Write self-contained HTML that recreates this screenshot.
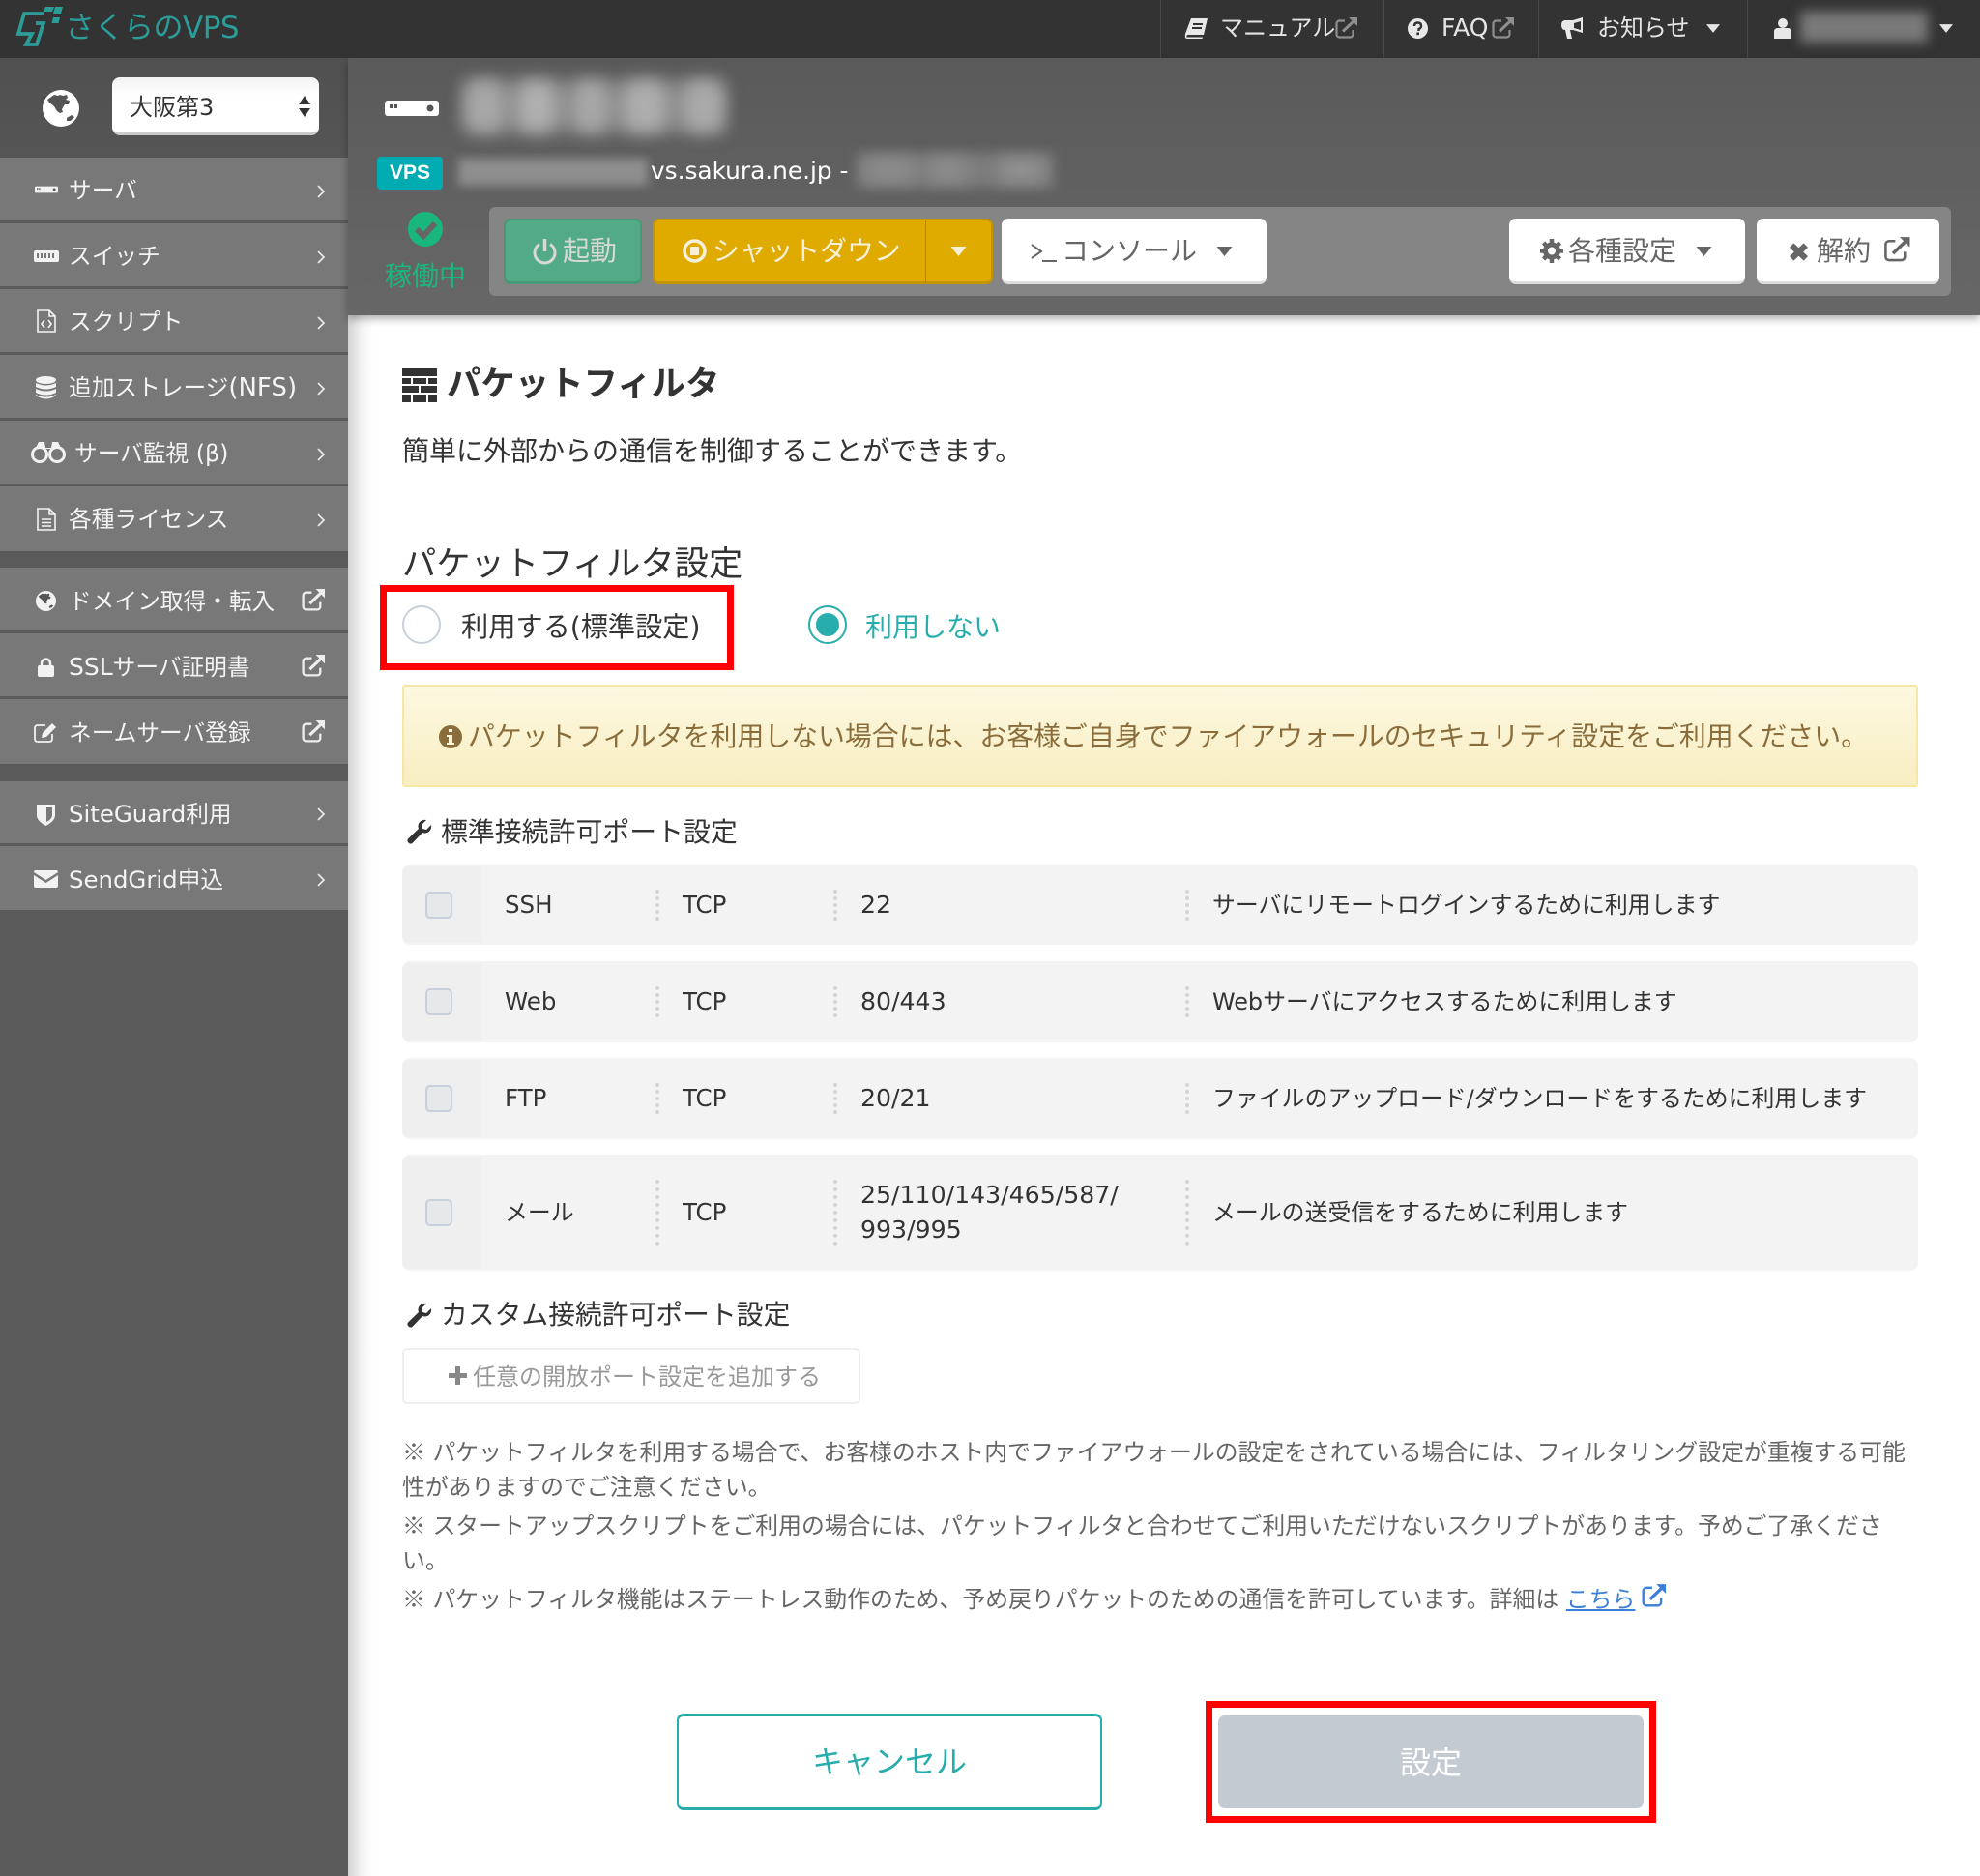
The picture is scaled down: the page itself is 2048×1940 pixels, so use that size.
<!DOCTYPE html>
<html lang="ja"><head><meta charset="utf-8"><title>パケットフィルタ</title>
<style>
html,body{margin:0;padding:0;background:#fff}
body{position:relative;width:2048px;height:1940px;overflow:hidden;font-family:"DejaVu Sans","Noto Sans CJK JP",sans-serif;color:#333}
.a{position:absolute}
.t{position:absolute;white-space:nowrap;line-height:40px;margin-top:-18px;font-size:24px;letter-spacing:0}
svg{position:absolute;overflow:visible}
.row{position:absolute;left:0;width:360px;background:#787878;border-bottom:3px solid #5c5c5c;box-sizing:border-box}
.m{color:#f4f4f4;left:71px;font-size:23.700px}
.tb{position:absolute;left:416px;width:1568px;background:#f3f3f3;border-radius:8px}
.tb i{position:absolute;left:0;top:2px;bottom:2px;width:82px;background:#efefef;border-radius:8px 0 0 8px}
.cb{position:absolute;left:440px;width:24px;height:24px;background:#e6e8ea;border:2px solid #c8d0da;border-radius:5px}
.dot{position:absolute;width:0;border-left:4px dotted #d4d4d4}
.b{position:absolute;top:226px;height:68px;box-sizing:border-box;border-radius:7px;background:#fff;border-bottom:3px solid #ddd}
.bt{color:#666;font-size:28px}
.red{position:absolute;box-sizing:border-box;border:7px solid #f00}
.n{font-size:23.850px;color:#666;left:416px}
.k{font-family:"Noto Sans CJK JP",sans-serif}
.la{font-size:24.500px}
.po{font-size:25.200px}
.j{font-size:23.900px}
.bl{position:absolute;filter:blur(9px);border-radius:12px}
</style></head><body>
<svg width="0" height="0" style="position:absolute">
<defs>
<symbol id="ext" viewBox="0 0 24 24"><path d="M11 4.500H5.500a3 3 0 0 0-3 3v11a3 3 0 0 0 3 3h11a3 3 0 0 0 3-3V14" fill="none" stroke="currentColor" stroke-width="2.200"/><path d="M9 15.500L20 5" fill="none" stroke="currentColor" stroke-width="3"/><path d="M15 1h9v9z" fill="currentColor"/></symbol>
<symbol id="chev" viewBox="0 0 8 14"><path d="M1 1l6 6-6 6" fill="none" stroke="currentColor" stroke-width="1.600"/></symbol>
<symbol id="car" viewBox="0 0 16 10"><path d="M0 0h16l-8 10z" fill="currentColor"/></symbol>
<symbol id="wr" viewBox="0 0 26 26"><path d="M25 6c1 5-3 10-9 8L6 24.500c-1.500 1.500-3 1.500-4.500 0S0 21.500 1.500 20L12 10C10 4 15 0 20 1l-5 5 1 4 4 1z" fill="currentColor"/></symbol>
<symbol id="srv" viewBox="0 0 56 16"><rect width="56" height="16" rx="3" fill="currentColor"/><circle cx="47" cy="8" r="3.500" fill="#555"/><rect x="5" y="4" width="3" height="4" fill="#555"/><rect x="10" y="4" width="3" height="4" fill="#555"/></symbol>
<symbol id="gl" viewBox="0 0 38 38"><circle cx="19" cy="19" r="19" fill="currentColor"/><path d="M5 10l7-5 4 1 2-1 3 1 4-1 1 3-2 2 4 1-1 4-4 0-3 5 1 3-3 1-3-2-3-5-5-4zM25 29l5-3 3 2-4 4-4 0z" fill="#555"/></symbol>
</defs></svg>

<!-- top bar -->
<div class="a" style="left:0;top:0;width:2048px;height:60px;background:#333"></div>
<svg style="left:10px;top:5px" width="60" height="50" viewBox="0 0 60 50"><path d="M35 9H15L9 30H23L17 41H28L35 19H27" fill="none" stroke="#2b9c98" stroke-width="3.800"/><path d="M37 2h9l-2 5h-9zM47 2h8l-2 7h-8zM45 13h7l-1.500 6h-7z" fill="#2b9c98"/></svg>
<div class="t" style="left:67px;top:27px;font-size:31px;letter-spacing:-.5px;color:#2b9c98">さくらのVPS</div>
<div class="a" style="left:1200px;top:0;width:1px;height:60px;background:#4a4a4a"></div>
<div class="a" style="left:1431px;top:0;width:1px;height:60px;background:#4a4a4a"></div>
<div class="a" style="left:1591px;top:0;width:1px;height:60px;background:#4a4a4a"></div>
<div class="a" style="left:1807px;top:0;width:1px;height:60px;background:#4a4a4a"></div>
<svg style="left:1226px;top:19px;color:#e8e8e8" width="24" height="21" viewBox="0 0 24 21"><path d="M6 0h17l-4 17H3q-2 0-1.500 2.500H18l-.5 1.500H2Q-1 21 0 16zM8 5h10v2H8zM7 9h10v2H7z" fill="#e8e8e8" fill-rule="evenodd"/></svg>
<div class="t" style="left:1262px;top:27px;color:#e4e4e4">マニュアル</div>
<svg style="left:1380px;top:17px;color:#8f8f8f" width="24" height="24"><use href="#ext"/></svg>
<svg style="left:1456px;top:19px" width="21" height="21" viewBox="0 0 21 21"><circle cx="10.500" cy="10.500" r="10.500" fill="#e8e8e8"/><path d="M7 8q0-3.500 3.500-3.500T14 8q0 2-2.500 3v2" fill="none" stroke="#333" stroke-width="2.400"/><rect x="9.300" y="14.500" width="2.700" height="2.700" fill="#333"/></svg>
<div class="t" style="left:1491px;top:27px;font-size:25px;color:#e4e4e4">FAQ</div>
<svg style="left:1542px;top:17px;color:#8f8f8f" width="24" height="24"><use href="#ext"/></svg>
<svg style="left:1615px;top:18px" width="25" height="23" viewBox="0 0 25 23"><path d="M22 0v16L12 13H9l2 9H6L4 13Q0 13 0 8t4-5h8z" fill="#e8e8e8"/><path d="M20 4v9l-7-2V6z" fill="#333"/></svg>
<div class="t" style="left:1652px;top:27px;color:#e4e4e4">お知らせ</div>
<svg style="left:1765px;top:25px;color:#e4e4e4" width="14" height="9"><use href="#car"/></svg>
<svg style="left:1835px;top:19px" width="18" height="21" viewBox="0 0 18 21"><circle cx="9" cy="5" r="5" fill="#e8e8e8"/><path d="M0 21V14q0-4 4-4h10q4 0 4 4v7z" fill="#e8e8e8"/></svg>
<div class="a" style="left:1862px;top:12px;width:132px;height:32px;background:#7a7a7a;filter:blur(6px)"></div>
<svg style="left:2006px;top:25px;color:#e4e4e4" width="14" height="9"><use href="#car"/></svg>

<!-- sidebar -->
<div class="a" style="left:0;top:60px;width:360px;height:1880px;background:linear-gradient(#505050,#5a5a5a 200px,#5a5a5a)"></div>
<svg style="left:44px;top:93px;color:#fff" width="38" height="38"><use href="#gl"/></svg>
<div class="a" style="left:116px;top:80px;width:214px;height:60px;box-sizing:border-box;border-radius:8px;background:linear-gradient(#f3f3f3,#fff 35%);border-bottom:3px solid #ccc"></div>
<div class="t" style="left:134px;top:109px;color:#333">大阪第3</div>
<div class="a" style="left:309px;top:99px;width:0;height:0;border:6px solid transparent;border-top:0;border-bottom:9px solid #333"></div>
<div class="a" style="left:309px;top:112px;width:0;height:0;border:6px solid transparent;border-bottom:0;border-top:9px solid #333"></div>

<div class="row" style="top:163px;height:68px"></div>
<div class="row" style="top:231px;height:68px"></div>
<div class="row" style="top:299px;height:68px"></div>
<div class="row" style="top:367px;height:68px"></div>
<div class="row" style="top:435px;height:68px"></div>
<div class="row" style="top:503px;height:67px;border-bottom:0"></div>
<div class="row" style="top:587px;height:68px"></div>
<div class="row" style="top:655px;height:68px"></div>
<div class="row" style="top:723px;height:67px;border-bottom:0"></div>
<div class="row" style="top:808px;height:67px"></div>
<div class="row" style="top:875px;height:66px;border-bottom:0"></div>

<svg style="left:36px;top:192px;color:#f2f2f2" width="24" height="8"><use href="#srv" style="color:#f2f2f2"/></svg>
<div class="t m" style="top:195px">サーバ</div>
<svg style="left:35px;top:259px" width="26" height="12" viewBox="0 0 26 12"><rect width="26" height="12" rx="2" fill="#f2f2f2"/><path d="M4 3v5M8 3v5M12 3v5M16 3v5M20 3v5" stroke="#777" stroke-width="2"/></svg>
<div class="t m" style="top:263px">スイッチ</div>
<svg style="left:38px;top:320px" width="20" height="24" viewBox="0 0 20 24"><path d="M1 1h12l6 6v16H1zM13 1v6h6M8 11l-3 4 3 4M12 11l3 4-3 4" fill="none" stroke="#f2f2f2" stroke-width="1.600"/></svg>
<div class="t m" style="top:331px">スクリプト</div>
<svg style="left:37px;top:389px" width="21" height="24" viewBox="0 0 21 24"><ellipse cx="10.500" cy="4" rx="10.500" ry="4" fill="#f2f2f2"/><path d="M0 7q10.500 5 21 0v4q-10.500 5-21 0zM0 13q10.500 5 21 0v4q-10.500 5-21 0zM0 19q10.500 5 21 0v1q-10.500 7-21 0z" fill="#f2f2f2"/></svg>
<div class="t m" style="top:399px">追加ストレージ<span style="font-size:26px">(NFS)</span></div>
<svg style="left:32px;top:456px" width="36" height="23" viewBox="0 0 36 23"><circle cx="9" cy="14" r="7.500" fill="none" stroke="#f2f2f2" stroke-width="3"/><circle cx="27" cy="14" r="7.500" fill="none" stroke="#f2f2f2" stroke-width="3"/><path d="M6 5l2-4h6l1 6h6l1-6h6l2 4v3H6z" fill="#f2f2f2"/></svg>
<div class="t m" style="top:467px;left:77px">サーバ監視 (β)</div>
<svg style="left:38px;top:525px" width="20" height="24" viewBox="0 0 20 24"><path d="M1 1h12l6 6v16H1zM13 1v6h6M5 12h10M5 15.500h10M5 19h10" fill="none" stroke="#f2f2f2" stroke-width="1.600"/></svg>
<div class="t m" style="top:535px">各種ライセンス</div>

<svg style="left:37px;top:611px;color:#f2f2f2" width="21" height="21"><use href="#gl" width="21" height="21"/></svg>
<div class="t m" style="top:620px">ドメイン取得・転入</div>
<svg style="left:39px;top:680px" width="17" height="20" viewBox="0 0 17 20"><path d="M4 9V6a4.500 4.500 0 0 1 9 0v3" fill="none" stroke="#f2f2f2" stroke-width="2.500"/><rect y="8" width="17" height="12" rx="2" fill="#f2f2f2"/></svg>
<div class="t m" style="top:688px"><span style="font-size:25px">SSL</span>サーバ証明書</div>
<svg style="left:35px;top:746px" width="24" height="22" viewBox="0 0 24 22"><path d="M12 4H4Q1 4 1 7v11q0 3 3 3h12q3 0 3-3v-5" fill="none" stroke="#f2f2f2" stroke-width="1.800"/><path d="M9 12L19 2l4 4-10 10-5 1z" fill="#f2f2f2"/></svg>
<div class="t m" style="top:756px">ネームサーバ登録</div>

<svg style="left:38px;top:831px" width="19" height="23" viewBox="0 0 19 23"><path d="M0 1h19v11q0 6-9.500 11Q0 18 0 12z" fill="#f2f2f2"/><path d="M10 4h6v8q0 4-6 7z" fill="#787878"/></svg>
<div class="t m" style="top:840px"><span style="font-size:24.400px">SiteGuard</span>利用</div>
<svg style="left:35px;top:900px" width="25" height="18" viewBox="0 0 25 18"><path d="M2 0h21q2 0 2 2L12.500 10 0 2q0-2 2-2zM0 5l12.500 8L25 5v11q0 2-2 2H2q-2 0-2-2z" fill="#f2f2f2"/></svg>
<div class="t m" style="top:908px"><span style="font-size:24.400px">SendGrid</span>申込</div>

<svg style="left:328px;top:191px;color:#eee" width="8" height="14"><use href="#chev"/></svg>
<svg style="left:328px;top:259px;color:#eee" width="8" height="14"><use href="#chev"/></svg>
<svg style="left:328px;top:327px;color:#eee" width="8" height="14"><use href="#chev"/></svg>
<svg style="left:328px;top:395px;color:#eee" width="8" height="14"><use href="#chev"/></svg>
<svg style="left:328px;top:463px;color:#eee" width="8" height="14"><use href="#chev"/></svg>
<svg style="left:328px;top:531px;color:#eee" width="8" height="14"><use href="#chev"/></svg>
<svg style="left:311px;top:608px;color:#eee" width="25" height="25"><use href="#ext"/></svg>
<svg style="left:311px;top:676px;color:#eee" width="25" height="25"><use href="#ext"/></svg>
<svg style="left:311px;top:744px;color:#eee" width="25" height="25"><use href="#ext"/></svg>
<svg style="left:328px;top:835px;color:#eee" width="8" height="14"><use href="#chev"/></svg>
<svg style="left:328px;top:903px;color:#eee" width="8" height="14"><use href="#chev"/></svg>

<!-- content shadow -->
<div class="a" style="left:360px;top:326px;width:26px;height:1614px;background:linear-gradient(90deg,#d2d2d2,#f4f4f4 55%,#fff)"></div>

<!-- title bar -->
<div class="a" style="left:360px;top:60px;width:1688px;height:266px;background:linear-gradient(#5a5a5a,#676767);box-shadow:0 4px 8px rgba(0,0,0,.3)"></div>
<svg style="left:398px;top:104px;color:#fff" width="56" height="16"><use href="#srv"/></svg>
<div class="a" style="left:480px;top:84px;width:268px;height:52px;background:#8c8c8c;filter:blur(9px)"></div>
<div class="bl" style="left:482px;top:84px;width:38px;height:52px;background:#a8a8a8"></div>
<div class="bl" style="left:536px;top:84px;width:38px;height:52px;background:#b0b0b0"></div>
<div class="bl" style="left:594px;top:84px;width:34px;height:52px;background:#a8a8a8"></div>
<div class="bl" style="left:646px;top:84px;width:42px;height:52px;background:#aeaeae"></div>
<div class="bl" style="left:708px;top:84px;width:40px;height:52px;background:#aaa"></div>
<div class="a" style="left:390px;top:162px;width:68px;height:34px;border-radius:4px;background:#00acb2"></div>
<div class="t" style="left:390px;width:68px;text-align:center;top:177px;font-size:21px;font-weight:bold;color:#fff;font-family:'Liberation Sans',sans-serif">VPS</div>
<div class="a" style="left:474px;top:164px;width:196px;height:28px;background:#8e8e8e;filter:blur(5px)"></div>
<div class="t" style="left:673px;top:175px;font-size:24.800px;color:#fff">vs.sakura.ne.jp -</div>
<div class="a" style="left:886px;top:158px;width:204px;height:36px;background:#7c7c7c;filter:blur(6px)"></div>
<div class="a" style="left:896px;top:164px;width:50px;height:24px;background:#8c8c8c;filter:blur(8px)"></div>
<div class="a" style="left:960px;top:164px;width:40px;height:24px;background:#8c8c8c;filter:blur(8px)"></div>
<div class="a" style="left:1034px;top:164px;width:44px;height:24px;background:#909090;filter:blur(8px)"></div>
<svg style="left:422px;top:219px" width="36" height="36" viewBox="0 0 36 36"><circle cx="18" cy="18" r="18" fill="#19b67d"/><path d="M9 18l7 7 12-13" fill="none" stroke="#666" stroke-width="6"/></svg>
<div class="t" style="left:398px;top:284px;font-size:28px;color:#19b67d">稼働中</div>

<div class="a" style="left:506px;top:214px;width:1512px;height:92px;background:#858585;border-radius:6px"></div>
<div class="b" style="left:521px;width:143px;background:#52ab86;border:2px solid #469a78;border-bottom-width:3px"></div>
<svg style="left:551px;top:246px" width="25" height="29" viewBox="0 0 25 29"><path d="M7 6.500a10.500 10.500 0 1 0 11 0" fill="none" stroke="#d8d8d8" stroke-width="3"/><path d="M12.500 1v13" stroke="#d8d8d8" stroke-width="3.500"/></svg>
<div class="t" style="left:582px;top:258px;font-size:28px;color:#d8d8d8">起動</div>
<div class="b" style="left:675px;width:352px;background:#e0ab00;border:2px solid #c49500;border-bottom-width:3px"></div>
<div class="a" style="left:957px;top:228px;width:1px;height:64px;background:#a8820f"></div>
<svg style="left:706px;top:247px" width="25" height="25" viewBox="0 0 25 25"><circle cx="12.500" cy="12.500" r="10.500" fill="none" stroke="#f6f0da" stroke-width="3.500"/><rect x="8" y="8" width="9" height="9" rx="1" fill="#f6f0da"/></svg>
<div class="t" style="left:737px;top:258px;font-size:27.800px;color:#f6f0da">シャットダウン</div>
<svg style="left:983px;top:255px;color:#f6f0da" width="17" height="10"><use href="#car"/></svg>
<div class="b" style="left:1036px;width:274px"></div>
<svg style="left:1066px;top:250px" width="28" height="22" viewBox="0 0 28 22"><path d="M1 3l10 7-10 7" fill="none" stroke="#666" stroke-width="2"/><path d="M12 20h15" stroke="#666" stroke-width="2"/></svg>
<div class="t bt" style="left:1098px;top:258px">コンソール</div>
<svg style="left:1258px;top:255px;color:#666" width="17" height="10"><use href="#car"/></svg>
<div class="b" style="left:1561px;width:244px"></div>
<svg style="left:1593px;top:247px" width="24" height="25" viewBox="0 0 24 25"><circle cx="12" cy="12.500" r="6.500" fill="none" stroke="#666" stroke-width="5"/><path d="M12 0v25M0 12.500h24M3.500 4l17 17M20.500 4l-17 17" stroke="#666" stroke-width="4.500" stroke-dasharray="5 15"/></svg>
<div class="t bt" style="left:1622px;top:258px">各種設定</div>
<svg style="left:1754px;top:255px;color:#666" width="17" height="10"><use href="#car"/></svg>
<div class="b" style="left:1817px;width:189px"></div>
<svg style="left:1850px;top:250px" width="21" height="21" viewBox="0 0 20 19"><path d="M3 3l14 13M17 3L3 16" stroke="#666" stroke-width="6"/></svg>
<div class="t bt" style="left:1879px;top:258px">解約</div>
<svg style="left:1947px;top:244px;color:#666" width="29" height="28"><use href="#ext"/></svg>

<!-- heading -->
<svg style="left:416px;top:381px" width="36" height="35" viewBox="0 0 36 35"><path d="M0 0h36v8H0zM0 10h9v6H0zM11 10h14v6H11zM27 10h9v6h-9zM0 18h17v7H0zM19 18h17v7H19zM0 27h9v8H0zM11 27h14v8H11zM27 27h9v8h-9z" fill="#333"/></svg>
<div class="t" style="left:462px;top:396px;font-size:35.400px;font-weight:bold;color:#333">パケットフィルタ</div>
<div class="t" style="left:416px;top:465px;font-size:28px;color:#333">簡単に外部からの通信を制御することができます。</div>
<div class="t" style="left:416px;top:582px;font-size:35.300px;color:#333">パケットフィルタ設定</div>

<!-- radios -->
<div class="a" style="left:416px;top:626px;width:36px;height:36px;border:2px solid #c8d0da;border-radius:50%;background:#fff"></div>
<div class="t" style="left:477px;top:647px;font-size:28.200px;color:#333">利用する(標準設定)</div>
<div class="a" style="left:836px;top:626px;width:36px;height:36px;border:2px solid #27aeac;border-radius:50%;background:#fff"></div>
<div class="a" style="left:844px;top:634px;width:24px;height:24px;border-radius:50%;background:#27aeac"></div>
<div class="t" style="left:895px;top:647px;font-size:28px;color:#27aeac">利用しない</div>
<div class="red" style="left:393px;top:605px;width:366px;height:88px"></div>

<!-- alert -->
<div class="a" style="left:416px;top:708px;width:1568px;height:106px;box-sizing:border-box;border:2px solid #f5e8a4;border-radius:3px;background:linear-gradient(#fdf8e0,#f8eec2)"></div>
<svg style="left:454px;top:750px" width="24" height="24" viewBox="0 0 24 24"><circle cx="12" cy="12" r="12" fill="#8a6d3b"/><path d="M10 4h4v3h-4zM8 10h6v8h2v2H8v-2h2v-6H8z" fill="#fdf6d8"/></svg>
<div class="t" style="left:484px;top:760px;font-size:27.900px;color:#8a6d3b">パケットフィルタを利用しない場合には、お客様ご自身でファイアウォールのセキュリティ設定をご利用ください。</div>

<svg style="left:421px;top:847px;color:#333" width="26" height="26"><use href="#wr"/></svg>
<div class="t" style="left:456px;top:859px;font-size:27.900px;color:#333">標準接続許可ポート設定</div>

<!-- table -->
<div class="tb" style="top:894px;height:83px"><i></i></div>
<div class="tb" style="top:994px;height:84px"><i></i></div>
<div class="tb" style="top:1094px;height:84px"><i></i></div>
<div class="tb" style="top:1194px;height:120px"><i></i></div>
<div class="cb" style="top:922px"></div>
<div class="cb" style="top:1022px"></div>
<div class="cb" style="top:1122px"></div>
<div class="cb" style="top:1240px"></div>
<div class="dot" style="left:678px;top:920px;height:32px"></div>
<div class="dot" style="left:862px;top:920px;height:32px"></div>
<div class="dot" style="left:1226px;top:920px;height:32px"></div>
<div class="dot" style="left:678px;top:1020px;height:32px"></div>
<div class="dot" style="left:862px;top:1020px;height:32px"></div>
<div class="dot" style="left:1226px;top:1020px;height:32px"></div>
<div class="dot" style="left:678px;top:1120px;height:32px"></div>
<div class="dot" style="left:862px;top:1120px;height:32px"></div>
<div class="dot" style="left:1226px;top:1120px;height:32px"></div>
<div class="dot" style="left:678px;top:1220px;height:68px"></div>
<div class="dot" style="left:862px;top:1220px;height:68px"></div>
<div class="dot" style="left:1226px;top:1220px;height:68px"></div>

<div class="t la" style="left:522px;top:934px">SSH</div>
<div class="t la" style="left:706px;top:934px">TCP</div>
<div class="t po" style="left:890px;top:934px">22</div>
<div class="t j" style="left:1254px;top:934px">サーバにリモートログインするために利用します</div>
<div class="t la" style="left:522px;top:1034px">Web</div>
<div class="t la" style="left:706px;top:1034px">TCP</div>
<div class="t po" style="left:890px;top:1034px">80/443</div>
<div class="t j" style="left:1254px;top:1034px">Webサーバにアクセスするために利用します</div>
<div class="t la" style="left:522px;top:1134px">FTP</div>
<div class="t la" style="left:706px;top:1134px">TCP</div>
<div class="t po" style="left:890px;top:1134px">20/21</div>
<div class="t j" style="left:1254px;top:1134px">ファイルのアップロード/ダウンロードをするために利用します</div>
<div class="t j" style="left:522px;top:1252px">メール</div>
<div class="t la" style="left:706px;top:1252px">TCP</div>
<div class="t po" style="left:890px;top:1234px">25/110/143/465/587/</div>
<div class="t po" style="left:890px;top:1270px">993/995</div>
<div class="t j" style="left:1254px;top:1252px">メールの送受信をするために利用します</div>

<svg style="left:421px;top:1347px;color:#333" width="26" height="26"><use href="#wr"/></svg>
<div class="t" style="left:456px;top:1358px;font-size:27.800px;color:#333">カスタム接続許可ポート設定</div>

<div class="a" style="left:416px;top:1394px;width:474px;height:58px;box-sizing:border-box;border:2px solid #eee;border-radius:5px;background:#fff"></div>
<svg style="left:464px;top:1413px" width="19" height="19" viewBox="0 0 19 19"><path d="M7 0h5v7h7v5h-7v7H7v-7H0V7h7z" fill="#888"/></svg>
<div class="t" style="left:489px;top:1422px;color:#999">任意の開放ポート設定を追加する</div>

<!-- notes -->
<div class="t n" style="top:1498px"><span class="k">※</span> パケットフィルタを利用する場合で、お客様のホスト内でファイアウォールの設定をされている場合には、フィルタリング設定が重複する可能</div>
<div class="t n" style="top:1536px">性がありますのでご注意ください。</div>
<div class="t n" style="top:1574px"><span class="k">※</span> スタートアップスクリプトをご利用の場合には、パケットフィルタと合わせてご利用いただけないスクリプトがあります。予めご了承くださ</div>
<div class="t n" style="top:1612px">い。</div>
<div class="t n" style="top:1650px"><span class="k">※</span> パケットフィルタ機能はステートレス動作のため、予め戻りパケットのための通信を許可しています。詳細は <span style="color:#3b7fd9;text-decoration:underline">こちら</span></div>
<svg style="left:1697px;top:1637px;color:#3b7fd9" width="26" height="26"><use href="#ext"/></svg>

<!-- buttons -->
<div class="a" style="left:700px;top:1772px;width:440px;height:100px;box-sizing:border-box;border:2px solid #27aeac;border-top-width:3px;border-bottom-width:3px;border-radius:7px;background:#fff"></div>
<div class="t" style="left:700px;width:440px;text-align:center;top:1820px;font-size:32px;color:#27aeac">キャンセル</div>
<div class="a" style="left:1260px;top:1774px;width:440px;height:96px;background:#c3cad2;border-radius:7px"></div>
<div class="t" style="left:1260px;width:440px;text-align:center;top:1821px;font-size:32px;color:#fff">設定</div>
<div class="red" style="left:1247px;top:1759px;width:466px;height:126px"></div>
</body></html>
